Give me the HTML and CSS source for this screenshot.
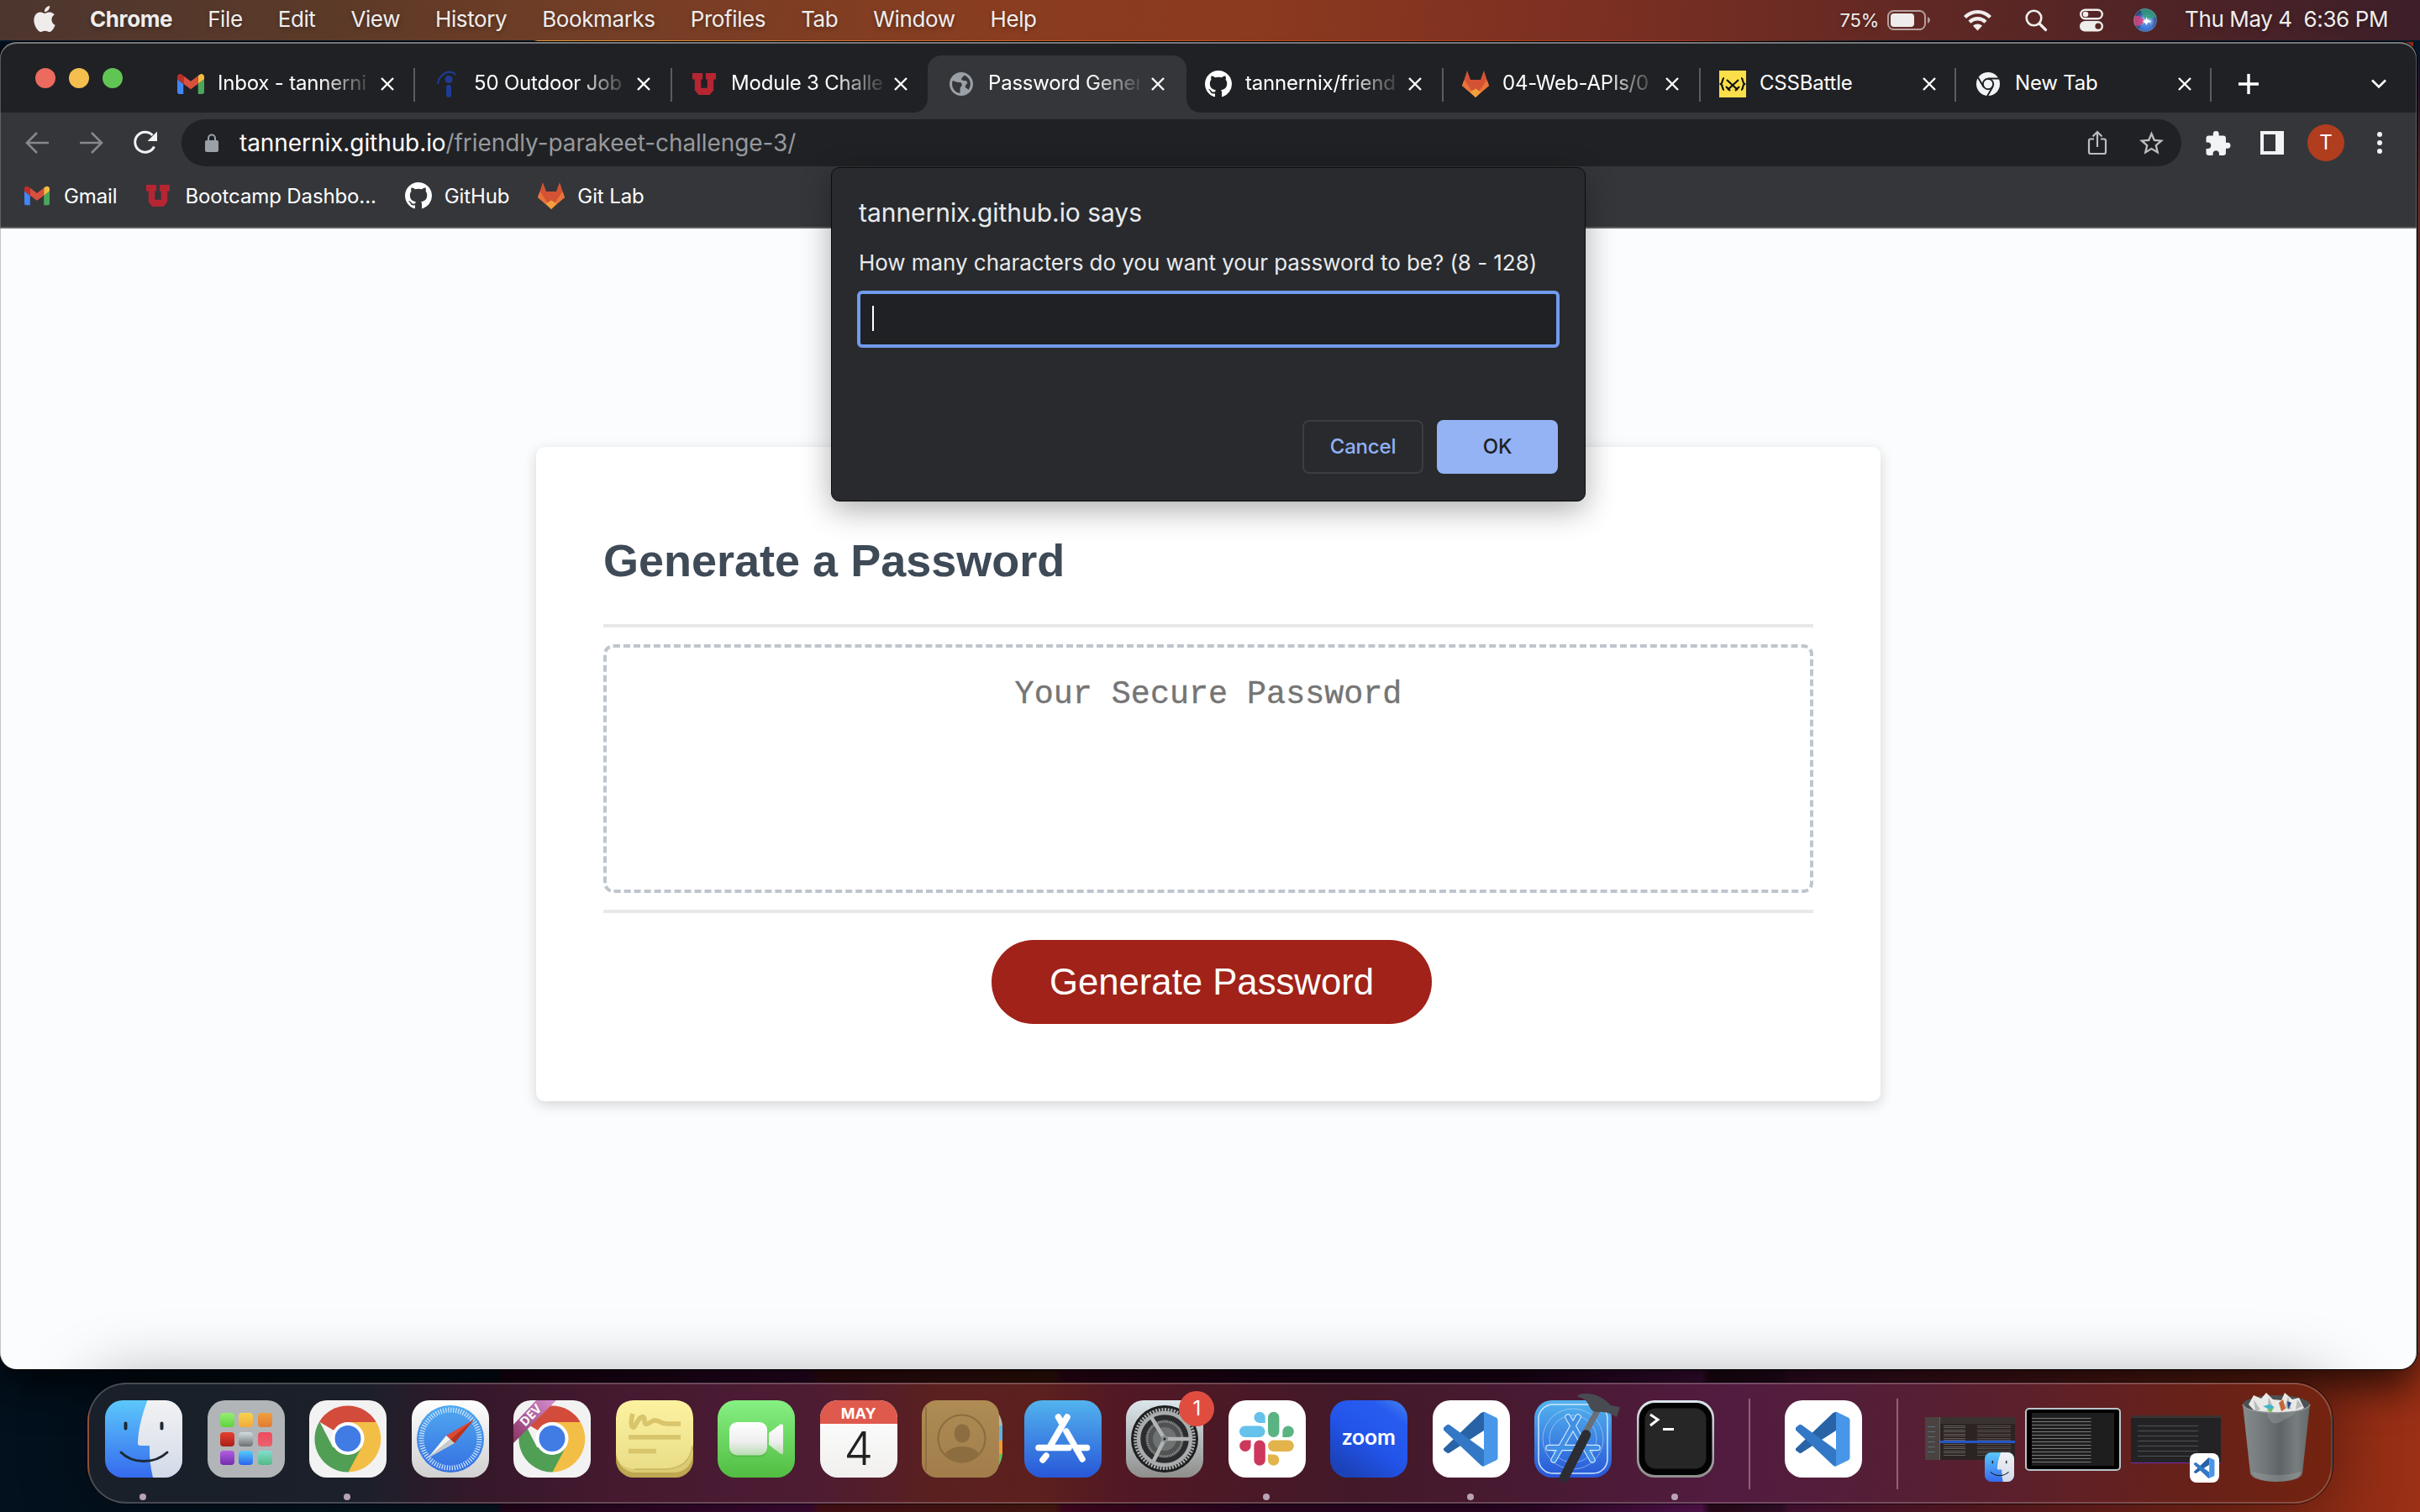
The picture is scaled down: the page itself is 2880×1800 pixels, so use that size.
FILE: index.html
```html
<!DOCTYPE html>
<html lang="en">
<head>
<meta charset="utf-8">
<title>Password Generator</title>
<link rel="stylesheet" href="styles.css">
</head>
<body>
<svg class="defs" width="0" height="0">
  <defs>
    <linearGradient id="g-finder" x1="0" y1="0" x2="0" y2="1"><stop offset="0" stop-color="#5cc8fa"/><stop offset="1" stop-color="#356aee"/></linearGradient>
    <linearGradient id="g-face" x1="0" y1="0" x2="0" y2="1"><stop offset="0" stop-color="#f2f2f4"/><stop offset="1" stop-color="#d2dae8"/></linearGradient>
    <linearGradient id="g-silver" x1="0" y1="0" x2="0" y2="1"><stop offset="0" stop-color="#fff"/><stop offset="1" stop-color="#d0d0d0"/></linearGradient>
    <linearGradient id="g-safari" x1="0" y1="0" x2="0" y2="1"><stop offset="0" stop-color="#50a9f0"/><stop offset="1" stop-color="#356fe2"/></linearGradient>
    <linearGradient id="g-dev" x1="0" y1="1" x2="1" y2="0"><stop offset="0" stop-color="#8a3162"/><stop offset="1" stop-color="#d48fd0"/></linearGradient>
    <linearGradient id="g-note" x1="0" y1="0" x2="0" y2="1"><stop offset="0" stop-color="#fdf2a0"/><stop offset="1" stop-color="#e9dd88"/></linearGradient>
    <linearGradient id="g-green" x1="0" y1="0" x2="0" y2="1"><stop offset="0" stop-color="#86f083"/><stop offset="1" stop-color="#52bd42"/></linearGradient>
    <linearGradient id="g-cam" x1="0" y1="0" x2="0" y2="1"><stop offset="0" stop-color="#fff"/><stop offset=".6" stop-color="#eee"/><stop offset="1" stop-color="#b9ddb3"/></linearGradient>
    <linearGradient id="g-brown" x1="0" y1="0" x2="0" y2="1"><stop offset="0" stop-color="#ae8c54"/><stop offset="1" stop-color="#a27d4b"/></linearGradient>
    <linearGradient id="g-store" x1="0" y1="0" x2="0" y2="1"><stop offset="0" stop-color="#52b3ee"/><stop offset="1" stop-color="#2857d8"/></linearGradient>
    <linearGradient id="g-set" x1="0" y1="0" x2="0" y2="1"><stop offset="0" stop-color="#dbe6ec"/><stop offset="1" stop-color="#8f8f8c"/></linearGradient>
    <linearGradient id="g-zoom" x1="1" y1="0" x2=".3" y2="1"><stop offset="0" stop-color="#4284ea"/><stop offset=".22" stop-color="#285cf0"/><stop offset=".6" stop-color="#2254ea"/><stop offset="1" stop-color="#1b42b8"/></linearGradient>
    <linearGradient id="g-bin" x1="0" y1="0" x2="1" y2="0"><stop offset="0" stop-color="#858a8c"/><stop offset=".3" stop-color="#74797b"/><stop offset=".55" stop-color="#5f6466"/><stop offset=".8" stop-color="#787d7f"/><stop offset="1" stop-color="#63686a"/></linearGradient>
    <radialGradient id="g-siri" cx=".55" cy=".55" r=".6"><stop offset="0" stop-color="#fff"/><stop offset=".25" stop-color="#8fb8f0"/><stop offset=".6" stop-color="#3b5fa8"/><stop offset="1" stop-color="#20324c"/></radialGradient>
    <clipPath id="c-app"><rect width="92" height="92" rx="21"/></clipPath>
    <clipPath id="c-siri"><circle cx="14" cy="14" r="14"/></clipPath>

    <symbol id="gmail" viewBox="52 42 88 66"><path fill="#4285f4" d="M58 108h14V74L52 59v43c0 3.320 2.690 6 6 6"/><path fill="#4ba75a" d="M120 108h14c3.320 0 6-2.690 6-6V59l-20 15"/><path fill="#f2bd3e" d="M120 48v26l20-15v-8c0-7.420-8.470-11.650-14.400-7.200"/><path fill="#d94f3d" d="M72 74V48l24 18 24-18v26L96 92"/><path fill="#bb2f28" d="M52 51v8l20 15V48l-5.600-4.200c-5.940-4.450-14.400-.22-14.400 7.200"/></symbol>
    <symbol id="indeed" viewBox="0 0 32 32"><path d="M5 16C6 7 14 0 22 2c2 .6 3 1.500 4 3" fill="none" stroke="#1e3c96" stroke-width="2"/><circle cx="18" cy="10.500" r="4.500" fill="#1e3c96"/><rect x="15" y="17" width="6" height="15" rx="3" fill="#1e3c96"/></symbol>
    <symbol id="utah" viewBox="0 0 32 30"><path fill="#b62532" d="M1 1h13v8h-2v11h8V9h-2V1h13v8h-3v14l-5 6H9l-5-6V9H1z"/></symbol>
    <symbol id="globe" viewBox="2 2 20 20"><path fill="#9aa0a6" d="M12 2C6.480 2 2 6.480 2 12s4.480 10 10 10 10-4.480 10-10S17.520 2 12 2zM4.200 12c0-1 .2-2 .5-2.800 2 .4 3.300 1.600 5.800 1.300 1.500 0 2 1 2 2.500 0 1-1.500 1.500-1.500 3v3.700C7 19.400 4.200 16 4.200 12zm13.700 5c-.4-1.600-2.500-1-2.500-3 0-1.500 2.600-2.500 1.500-4-1-1.200-3.500-.2-4.500-1.500-.8-1.200.5-2.500 1.600-3l.3-1c3.200 1 5.500 4 5.500 7.500 0 2-.7 3.700-1.900 5z"/></symbol>
    <symbol id="github" viewBox="0 0 16 16"><path fill="#fff" d="M8 0C3.580 0 0 3.580 0 8c0 3.540 2.290 6.530 5.470 7.590.4.070.55-.17.55-.38 0-.19-.01-.82-.01-1.490-2.010.37-2.530-.49-2.690-.94-.09-.23-.48-.94-.82-1.130-.28-.15-.68-.52-.01-.53.63-.01 1.080.58 1.230.82.720 1.210 1.870.87 2.330.66.070-.52.28-.87.51-1.070-1.780-.2-3.640-.89-3.640-3.950 0-.87.31-1.590.82-2.150-.08-.2-.36-1.020.08-2.120 0 0 .67-.21 2.200.82.640-.18 1.320-.27 2-.27s1.360.09 2 .27c1.530-1.040 2.200-.82 2.200-.82.440 1.100.16 1.920.08 2.120.51.56.82 1.270.82 2.150 0 3.070-1.870 3.750-3.650 3.950.29.25.54.73.54 1.480 0 1.070-.01 1.930-.01 2.200 0 .21.15.46.55.38A8.010 8.010 0 0 0 16 8c0-4.420-3.580-8-8-8z"/></symbol>
    <symbol id="gitlab" viewBox="0 0 32 32"><path fill="#e8743b" d="M2.500 11 0 18l16 14 16-14-2.500-7z"/><path fill="#d45334" d="M6 0 2.500 11 16 31 29.500 11 26 0l-4 11H10z"/><path fill="#e8743b" d="m2.500 11 7.500 12L16 31 0 18zM29.500 11 22 23l-6 8 16-13z"/><path fill="#f0a13e" d="m16 21.500-6.500 4L16 32l6.500-6.500z"/></symbol>
    <symbol id="battle" viewBox="0 0 32 32"><path fill="#fbdf4a" d="M0 0h32v32H0z"/><path d="M6 9c-3 0-1 5-4 7 3 2 1 7 4 7M26 9c3 0 1 5 4 7-3 2-1 7-4 7M9 11l13 12M23 11 10 23M8 19l5 5M24 19l-5 5" fill="none" stroke="#111" stroke-width="2.200"/></symbol>
    <symbol id="chromium" viewBox="0 0 28 28"><circle cx="14" cy="14" r="14" fill="#f1f3f4"/><circle cx="14" cy="14" r="6.200" fill="none" stroke="#202124" stroke-width="2"/><path d="M14 7.600h13M8.500 17.200 2 6.200M19.500 17.200 13 28.500" stroke="#202124" stroke-width="2"/></symbol>
    <symbol id="close" viewBox="0 0 16 16"><path d="m1 1 14 14M15 1 1 15" stroke="#fff" stroke-width="2.400"/></symbol>
    <symbol id="vscode" viewBox="0 0 92 92"><rect width="92" height="92" rx="21" fill="#fff"/><path fill="#2763a6" d="M13 57.500 57.500 15 61 13.700V36L20 62.500q-1.500 1-3 0L13 59.500z"/><path fill="#3378c6" d="M13 35.500v-3l4-3.200q1.500-1 3 0L61 59v19.500q-1.800.5-3.500-1z"/><path fill="#4896e8" d="m61 13.500 14.500 7q2 1 2 3v45q0 2-2 3l-14.500 7q-1 .3-1.500-.5l1.500-1.500z"/></symbol>
    <symbol id="finder" viewBox="0 0 92 92"><g clip-path="url(#c-app)"><path fill="url(#g-finder)" d="M0 0h92v92H0z"/><path fill="url(#g-face)" d="M50.500 0C43 20 39.500 36 39 51q0 3 3 3h11q-.5 20 4 38h35V0z"/></g><path d="M24.500 27.500v6M67.500 27.500v6" stroke="#1d2833" stroke-width="4" stroke-linecap="round"/><path d="M19 62c14 14 40 14 55 0" fill="none" stroke="#1d2833" stroke-width="3" stroke-linecap="round"/></symbol>
    <symbol id="chrome" viewBox="0 0 92 92"><rect width="92" height="92" rx="21" fill="#f3f2f2"/><path fill="#d34b3b" d="M46 46 12 25.500a39.500 39.500 0 0 1 67.500 0z"/><path fill="#f3be45" d="M46 46V26h33.800A39.500 39.500 0 0 1 46.500 85.500z"/><path fill="#519e55" d="M46 46l16.500 9.500-16 30A39.500 39.500 0 0 1 12.300 25.300l16 31z"/><circle cx="46" cy="45.500" r="19.500" fill="#fff"/><circle cx="46" cy="45.500" r="15.500" fill="#417be4"/></symbol>
  </defs>
</svg>

<header class="menubar">
  <svg class="apple" viewBox="2 0 20 24"><path fill="#efedec" d="M12.152 6.896c-.948 0-2.415-1.078-3.960-1.040-2.040.027-3.910 1.183-4.961 3.014-2.117 3.675-.546 9.103 1.519 12.090 1.013 1.454 2.208 3.090 3.792 3.039 1.520-.065 2.090-.987 3.935-.987 1.831 0 2.350.987 3.960.948 1.637-.026 2.676-1.480 3.676-2.948 1.156-1.688 1.636-3.325 1.662-3.415-.039-.013-3.182-1.221-3.220-4.857-.026-3.040 2.480-4.494 2.597-4.559-1.429-2.090-3.623-2.324-4.390-2.376-2-.156-3.675 1.090-4.610 1.090zM15.530 3.830c.843-1.012 1.400-2.427 1.245-3.830-1.207.052-2.662.805-3.532 1.818-.78.896-1.454 2.338-1.273 3.714 1.338.104 2.715-.688 3.559-1.701"/></svg>
  <nav class="menus"><b>Chrome</b><span>File</span><span>Edit</span><span>View</span><span>History</span><span>Bookmarks</span><span>Profiles</span><span>Tab</span><span>Window</span><span>Help</span></nav>
  <div class="status">
    <span class="percent">75%</span>
    <svg class="battery" viewBox="0 0 52 24"><rect x="1" y="1" width="44" height="22" rx="6.500" fill="none" stroke="#b6a09e" stroke-width="2"/><rect x="4" y="4" width="28" height="16" rx="4" fill="#efedec"/><path d="M48 8q3 1.500 3 4t-3 4z" fill="#b6a09e"/></svg>
    <svg class="wifi" viewBox="0 0 34 26"><path d="M2 9.500C10.500 1 23.500 1 32 9.500M7.500 15.200c5.300-5.300 13.700-5.300 19 0" fill="none" stroke="#efedec" stroke-width="4.300"/><path d="M17 25.500l-5.500-5.700c3-3 8-3 11 0z" fill="#efedec"/></svg>
    <svg class="search" viewBox="0 0 26 26"><circle cx="10.500" cy="10.500" r="8.800" fill="none" stroke="#efedec" stroke-width="2.600"/><path d="m17 17 7.500 7.500" stroke="#efedec" stroke-width="3.200" stroke-linecap="round"/></svg>
    <svg class="control" viewBox="0 0 28 28"><rect x="1.200" y="1.700" width="25.600" height="10.600" rx="5.300" fill="none" stroke="#efedec" stroke-width="2.400"/><circle cx="7" cy="7" r="3.300" fill="#efedec"/><rect y="15" width="28" height="12.500" rx="6.250" fill="#efedec"/><circle cx="22" cy="21.200" r="3.600" fill="#552826"/></svg>
    <svg class="siri" viewBox="0 0 28 28"><circle cx="14" cy="14" r="14" fill="url(#g-siri)"/><g clip-path="url(#c-siri)"><path d="M0 10C4 7 10 10 13 15c-3 5-8 7-13 5z" fill="#d8417c" opacity=".85"/><path d="M7 0c9-1 18 1 21 10-5 2-10 2-14 3z" fill="#2fa07a" opacity=".8"/><path d="M6 25c5 3 12 3 18-1-3-5-6-8-10-8z" fill="#3d7be0" opacity=".7"/></g><path d="m15.500 10 1.500 4 5 1.500-5 1.500-1.500 3-2-3-3-2 4-1z" fill="#fff"/><circle cx="14" cy="14" r="13.400" fill="none" stroke="#7d8a90" stroke-width="1" opacity=".7"/></svg>
    <span class="clock">Thu May 4&nbsp; 6:36 PM</span>
  </div>
</header>

<main class="window">
  <div class="tabstrip">
    <div class="lights"><i class="red"></i><i class="yellow"></i><i class="green"></i></div>
    <div class="tabs">
      <div class="tab"><svg class="fav"><use href="#gmail"/></svg><span class="label">Inbox - tannerni</span><svg class="x"><use href="#close"/></svg></div>
      <div class="tab"><svg class="fav tall"><use href="#indeed"/></svg><span class="label">50 Outdoor Job</span><svg class="x"><use href="#close"/></svg></div>
      <div class="tab plain"><svg class="fav"><use href="#utah"/></svg><span class="label">Module 3 Challe</span><svg class="x"><use href="#close"/></svg></div>
      <div class="tab active"><svg class="fav"><use href="#globe"/></svg><span class="label">Password Gener</span><svg class="x"><use href="#close"/></svg></div>
      <div class="tab"><svg class="fav tall"><use href="#github"/></svg><span class="label">tannernix/friend</span><svg class="x"><use href="#close"/></svg></div>
      <div class="tab"><svg class="fav tall"><use href="#gitlab"/></svg><span class="label">04-Web-APIs/0</span><svg class="x"><use href="#close"/></svg></div>
      <div class="tab"><svg class="fav tall"><use href="#battle"/></svg><span class="label whole">CSSBattle</span><svg class="x"><use href="#close"/></svg></div>
      <div class="tab"><svg class="fav"><use href="#chromium"/></svg><span class="label whole">New Tab</span><svg class="x"><use href="#close"/></svg></div>
    </div>
    <svg class="plus" viewBox="0 0 24 24"><path d="M12 0v24M0 12h24" stroke="#fff" stroke-width="3.400"/></svg>
    <svg class="chevron" viewBox="0 0 18 12"><path d="m1 1.500 8 8 8-8" fill="none" stroke="#fff" stroke-width="2.600"/></svg>
  </div>

  <div class="toolbar">
    <svg class="back" viewBox="0 0 28 26"><path d="M28 13H2M14 1 2 13l12 12" fill="none" stroke="#86888a" stroke-width="2.600"/></svg>
    <svg class="forward" viewBox="0 0 28 26"><path d="M0 13h26M14 1l12 12-12 12" fill="none" stroke="#86888a" stroke-width="2.600"/></svg>
    <svg class="reload" viewBox="0 0 28 28"><path d="M24.500 18.500A12 12 0 1 1 22.500 5" fill="none" stroke="#f1f3f4" stroke-width="3"/><path d="M28 .5V12H16.500z" fill="#f1f3f4"/></svg>
    <div class="omnibox">
      <svg class="lock" viewBox="0 0 16 22"><rect y="8" width="16" height="14" rx="2" fill="#9aa0a6"/><path d="M4 8V5.500a4 4 0 0 1 8 0V8" fill="none" stroke="#9aa0a6" stroke-width="2"/></svg>
      <span class="url"><span class="host">tannernix.github.io</span><span class="path">/friendly-parakeet-challenge-3/</span></span>
      <svg class="share" viewBox="0 0 22 30"><path d="M7 10.500H3q-2 0-2 2V26q0 2 2 2h16q2 0 2-2V12.500q0-2-2-2h-4M11 20V3M5.500 7.500 11 2l5.500 5.500" fill="none" stroke="#bdbdbf" stroke-width="2.200"/></svg>
      <svg class="star" viewBox="2 2 20 19"><path fill="#bdbdbf" d="M22 9.240l-7.190-.62L12 2 9.190 8.630 2 9.240l5.460 4.730L5.820 21 12 17.270 18.180 21l-1.630-7.030L22 9.240zM12 15.400l-3.760 2.270 1-4.280-3.320-2.880 4.380-.38L12 6.100l1.710 4.040 4.380.38-3.320 2.880 1 4.280L12 15.400z"/></svg>
    </div>
    <svg class="puzzle" viewBox="2 1 21 21"><path fill="#f1f3f4" d="M20.500 11H19V7c0-1.100-.9-2-2-2h-4V3.500a2.500 2.500 0 0 0-5 0V5H4c-1.100 0-1.990.9-1.990 2v3.800H3.500c1.490 0 2.700 1.210 2.700 2.700s-1.210 2.700-2.700 2.700H2V20c0 1.100.9 2 2 2h3.800v-1.500c0-1.490 1.210-2.700 2.700-2.700 1.490 0 2.700 1.210 2.700 2.700V22H17c1.100 0 2-.9 2-2v-4h1.500a2.500 2.500 0 0 0 0-5z"/></svg>
    <div class="panel"></div>
    <div class="avatar">T</div>
    <div class="dots"><i></i><i></i><i></i></div>
  </div>

  <div class="bookmarks">
    <div class="bm"><svg class="bi"><use href="#gmail"/></svg>Gmail</div>
    <div class="bm"><svg class="bi"><use href="#utah"/></svg>Bootcamp Dashbo...</div>
    <div class="bm near"><svg class="bi big"><use href="#github"/></svg>GitHub</div>
    <div class="bm near"><svg class="bi big"><use href="#gitlab"/></svg>Git Lab</div>
  </div>

  <div class="page">
    <section class="card">
      <h2>Generate a Password</h2>
      <div class="secret">Your Secure Password</div>
      <div class="foot"><button class="generate">Generate Password</button></div>
    </section>
  </div>

  <div class="dialog">
    <div class="says">tannernix.github.io says</div>
    <div class="question">How many characters do you want your password to be? (8 - 128)</div>
    <div class="field"><i class="caret"></i></div>
    <div class="actions"><button class="cancel">Cancel</button><button class="ok">OK</button></div>
  </div>
</main>

<footer class="dock">
  <div class="apps">
    <div class="app on"><svg viewBox="0 0 92 92"><use href="#finder"/></svg></div>
    <div class="app"><div class="launchpad"><i></i><i></i><i></i><i></i><i></i><i></i><i></i><i></i><i></i></div></div>
    <div class="app on"><svg viewBox="0 0 92 92"><use href="#chrome"/></svg></div>
    <div class="app"><svg viewBox="0 0 92 92"><rect width="92" height="92" rx="21" fill="url(#g-silver)"/><circle cx="46" cy="46" r="40" fill="url(#g-safari)"/><circle cx="46" cy="46" r="34.500" fill="none" stroke="#d4e8fa" stroke-width="6" stroke-dasharray="1.200 1.810"/><path fill="#db4a36" d="M74 23 41 42l10 9z"/><path fill="#b8321f" d="m74 23-28 23.500 5 4.500z"/><path fill="#f4f4f2" d="M19 69 41 42l5 4.500z"/><path fill="#c9cac8" d="m19 69 32-18-5-4.500z"/></svg></div>
    <div class="app"><svg viewBox="0 0 92 92"><use href="#chrome"/><path clip-path="url(#c-app)" fill="url(#g-dev)" d="M0 29 27 0h24L0 51z"/><text class="devtext" transform="translate(14 32) rotate(-46)">DEV</text></svg></div>
    <div class="app"><svg viewBox="0 0 92 92"><rect y="6" width="92" height="86" rx="21" fill="#bfa650"/><path fill="#dccb72" d="M0 60h92q-1 24-22 26H22Q2 84 0 60"/><path fill="url(#g-note)" d="M21 0h50q20 1 21 21v31q-2 28-34 30H22Q1 80 0 62V21Q1 1 21 0"/><path fill="none" stroke="#b8a04c" stroke-width="1.500" opacity=".6" d="M91 54q-3 27-33 28H22"/><path d="M20 16c-4 14 0 22 4 12 4-8 10-12 10-4 0 9 6 2 11 0 8-1 6 4 16 4h16M15 44h62M15 60.500h33" fill="none" stroke="#d8c56c" stroke-width="5.500"/></svg></div>
    <div class="app"><svg viewBox="0 0 92 92"><rect width="92" height="92" rx="21" fill="url(#g-green)"/><rect x="14" y="28" width="45" height="39.500" rx="9" fill="#3d9733" opacity=".35"/><rect x="14" y="26" width="45" height="39.500" rx="9" fill="url(#g-cam)"/><path d="M61 39l13-10q4-2 4 2v31q0 4-4 1L61 53z" fill="url(#g-cam)"/></svg></div>
    <div class="app"><div class="calendar"><b>MAY</b><span>4</span></div></div>
    <div class="app"><svg class="wide" viewBox="0 0 96 92"><path fill="#b7b7ae" d="M80 8q14 4 16 22H80z"/><path fill="#5fb3e6" d="M80 30h16v18H80z"/><path fill="#f29a34" d="M80 48h16v16H80z"/><path fill="#5fc264" d="M80 64h16q-2 18-16 22z"/><rect width="92" height="92" rx="18" fill="url(#g-brown)"/><path d="M5 8v76" stroke="#8a6a3c" stroke-width="1.500"/><circle cx="47.500" cy="45.500" r="28" fill="none" stroke="#8c6d40" stroke-width="2.200"/><ellipse cx="48" cy="39.500" rx="9.500" ry="11" fill="#8c6d40"/><path fill="#8c6d40" d="M28 63q7-8 20-8t20 8q-8 11.500-20 11.500T28 63"/></svg></div>
    <div class="app"><svg viewBox="0 0 92 92"><rect width="92" height="92" rx="21" fill="url(#g-store)"/><path d="M51 20 30 56M40.500 20l4 7M50 37l19 33M17 56.500h36M65 56.500h9.500M26 66l-4 5" stroke="#fff" stroke-width="7.500" stroke-linecap="round"/></svg></div>
    <div class="app"><svg viewBox="0 0 92 92"><rect width="92" height="92" rx="21" fill="url(#g-set)"/><circle cx="46" cy="46" r="40" fill="#1c1e1f"/><circle cx="46" cy="46" r="36.500" fill="#2a2c2d"/><circle cx="46" cy="46" r="35" fill="none" stroke="#aeb1b1" stroke-width="4" stroke-dasharray="2 1.660"/><circle cx="46" cy="46" r="31" fill="none" stroke="#a9acac" stroke-width="4.500"/><circle cx="46" cy="46" r="22" fill="#515353"/><circle cx="46" cy="46" r="21" fill="none" stroke="#8f9292" stroke-width="3" stroke-dasharray="1.200 1"/><circle cx="46" cy="46" r="14" fill="#6f7272"/><path d="M46 46h30M46 46 30 20M46 46 33 72" stroke="#b2b5b5" stroke-width="4.500"/><circle cx="46" cy="46" r="4" fill="#8b8e8e"/><circle cx="46" cy="46" r="1.500" fill="#222"/></svg><span class="badge">1</span></div>
    <div class="app on"><svg viewBox="0 0 92 92"><rect width="92" height="92" rx="21" fill="#fff"/><g fill="#66c2ea"><rect x="13" y="30.500" width="30.500" height="13.400" rx="6.700"/><path d="M30.500 20.400a6.600 6.600 0 0 1 13.200 0v6.700h-6.600a6.700 6.700 0 0 1-6.600-6.700"/></g><g fill="#5ab383"><rect x="47" y="13.700" width="13.400" height="30.200" rx="6.700"/><path d="M64.400 43.900v-6.700a6.700 6.700 0 1 1 6.700 6.700z"/></g><g fill="#ce375c"><rect x="30.400" y="47.500" width="13.400" height="30.200" rx="6.700"/><path d="M26.600 47.500v6.700a6.700 6.700 0 1 1-6.700-6.700z"/></g><g fill="#e2b44b"><rect x="47" y="47.500" width="30.800" height="13.400" rx="6.700"/><path d="M47 64.400h6.700a6.700 6.700 0 1 1-6.700 6.700z"/></g></svg></div>
    <div class="app"><svg viewBox="0 0 92 92"><rect width="92" height="92" rx="21" fill="url(#g-zoom)"/><text class="zoomtext" x="46" y="53">zoom</text></svg></div>
    <div class="app on"><svg viewBox="0 0 92 92"><use href="#vscode"/></svg></div>
    <div class="app"><svg viewBox="0 0 92 92"><rect width="92" height="92" rx="21" fill="url(#g-store)"/><g fill="none" stroke="#cfe6fb"><rect x="5" y="5" width="82" height="82" rx="17" stroke-width="1.500"/><circle cx="46" cy="46" r="36" stroke-width="1" opacity=".5"/><circle cx="46" cy="46" r="28" stroke-width="1" opacity=".5"/></g><path d="M52 20 23 71M40 20l29 51M17 56.500h58" stroke="#d5eafc" stroke-width="7.500" stroke-linecap="round"/><path d="M52 20 23 71M40 20l29 51M17 56.500h58" stroke="#4190e6" stroke-width="5.200" stroke-linecap="round"/><path d="M77 9 60 40" stroke="#6b6e74" stroke-width="7"/><path d="M61.500 41 35.500 92" stroke="#2b2d33" stroke-width="11.500" stroke-linecap="round"/><path fill="#484b51" d="M51-4q2-6 20-3 12 4 20 13l11 2-4 12-10-5q-10-2-14-1-7-1-9-8-4-9-14-10"/></svg></div>
    <div class="app on"><svg viewBox="0 0 92 92"><rect width="92" height="92" rx="21" fill="url(#g-set)"/><rect x="2.500" y="3" width="87" height="86" rx="19" fill="#030303"/><rect x="9.500" y="9.500" width="73" height="72" rx="13" fill="#262626"/><path d="m16 17 9 6-9 7" fill="none" stroke="#fff" stroke-width="3"/><path d="M31 34.500h13" stroke="#fff" stroke-width="3"/></svg></div>
  </div>
  <i class="rule"></i>
  <div class="app"><svg viewBox="0 0 92 92"><use href="#vscode"/></svg></div>
  <i class="rule"></i>
  <div class="thumbs">
    <div class="thumb files"><div class="side"></div><div class="list"><i class="head"></i><i class="rows a"></i><i class="sel"></i><i class="rows b"></i></div><svg class="mini"><use href="#finder"/></svg></div>
    <div class="thumb term"><i></i></div>
    <div class="thumb code"><i></i><svg class="mini"><use href="#vscode"/></svg></div>
  </div>
  <svg class="trash" viewBox="0 0 82 106"><ellipse cx="41" cy="14" rx="40" ry="11" fill="#4c5052"/><path fill="#e9e9e7" d="M8 14 14 3l9 4 6-7 8 8 10 1 4-9 9 8 8-2 6 12-12 10-22 1-20-2z"/><path fill="#b9bbba" d="m14 8 8 12-6 2zM32 5l6 14-8 2zM55 4l4 16-8-2zM66 8l-2 12 8-4z"/><path fill="#3fb5c9" d="m25 16 8-2 6 3-6 3z"/><path fill="#6cbf4a" d="m30 21 8-3-3 5z"/><path fill="#c2673a" d="m44 12 5-4 3 11-5 3z"/><path fill="#2d4a86" d="m54 10 5 2-4 8z"/><path fill="url(#g-bin)" d="M1 14q5 9 40 10 35-1 40-10l-9 82q-2 9-31 10-28-1-31-10z"/><path fill="#a3a8aa" opacity=".35" d="M12 94q29 8 59 0-2 11-30 12-27-1-29-12M30 24q4 20 20 8 8-3 14-9-10 3-34 1"/><path d="M1 14q3 9 40 10 37-1 40-10" fill="none" stroke="#8e9395" stroke-width="1.500"/></svg>
</footer>
</body>
</html>
```

FILE: styles.css
```css
* { box-sizing: border-box; }
html, body { margin: 0; height: 100%; }
body {
  width: 2880px;
  height: 1800px;
  overflow: hidden;
  display: flex;
  flex-direction: column;
  position: relative;
  font-family: Inter, "Liberation Sans", sans-serif;
  background:
    linear-gradient(90deg, #04192c 635px, #e09a3c 640px, #cf7434 1000px, #b0441f 1600px, #a03a20 2000px, #04192c 2250px) 0 48px / 100% 2px no-repeat,
    linear-gradient(#04192c 0, #3a1a3c 60px, #8a3a2c 180px, #a04226 400px, #a04226 100%) right 50px / 8px 1560px no-repeat,
    linear-gradient(90deg, #03111e 0, #04121e 590px, #23041a 600px, #3d0a36 965px, #4a1018 975px, #4a1a12 1255px, #430722 1265px, #2b0520 1500px, #2b0524 1800px, #571450 2025px, #2a0a1c 2035px, #34102a 2120px, #4a1236 2130px, #5c1a22 2350px, #7a2616 2650px, #9c3015 2880px);
}
svg { display: block; flex: none; overflow: visible; }
button { font: inherit; margin: 0; }
.defs { position: absolute; }

/* Menu bar */
.menubar {
  height: 48px;
  flex: none;
  display: flex;
  align-items: center;
  padding: 0 38px 0 40px;
  color: #efedec;
  font-size: 26px;
  letter-spacing: -.4px;
  line-height: 44px;
  text-shadow: 0 2px 5px rgba(0, 0, 0, .35);
  background: linear-gradient(90deg, #4d362f 0, #5c3a28 400px, #733e26 700px, #8a3d20 1200px, #8b391f 1500px, #7b2f22 1920px, #5c2724 2350px, #3d1f29 2880px);
}
.apple { width: 26px; height: 31px; margin: -3px 41px 0 0; }
.menus { display: flex; gap: 42px; white-space: nowrap; margin-top: -2px; }
.status { display: flex; align-items: center; margin-left: auto; height: 48px; }
.clock { margin-top: -2px; }
.percent { font-size: 22px; letter-spacing: -.2px; margin-right: 10px; }
.battery { width: 52px; height: 24px; margin-right: 38px; }
.wifi { width: 35px; height: 26px; margin-right: 39px; }
.search { width: 26px; height: 26px; margin-right: 39px; }
.control { width: 28px; height: 28px; margin-right: 36px; }
.siri { width: 28px; height: 28px; margin-right: 33px; }

/* Browser window */
.window {
  position: relative;
  flex: none;
  width: 2876px;
  height: 1580px;
  margin-top: 2px;
  display: flex;
  flex-direction: column;
  border-radius: 20px;
  background: #35363a;
  box-shadow: 0 0 0 1px #000, 0 20px 50px rgba(0, 0, 0, .75);
  clip-path: inset(-1px -4px -200px 0);
}
.window::after {
  content: "";
  position: absolute;
  inset: 0;
  border-radius: 20px;
  box-shadow: inset 0 2px 0 #77787b, inset 1px 0 0 rgba(140, 140, 145, .5), inset -1px 0 0 rgba(140, 140, 145, .5);
  pointer-events: none;
}
.tabstrip {
  height: 84px;
  flex: none;
  display: flex;
  align-items: center;
  padding: 16px 36px 0 42px;
  background: #202124;
  border-radius: 20px 20px 0 0;
}
.lights { display: flex; gap: 16px; width: 146px; margin-top: -14px; }
.lights i { width: 24px; height: 24px; border-radius: 50%; }
.red { background: #ec6a5e; }
.yellow { background: #f4bf4f; }
.green { background: #61c554; }
.tabs { display: grid; grid-template-columns: 305px 306px 305px 307px 306px 306px 304px 304px; height: 68px; flex: none; }
.tab {
  position: relative;
  display: flex;
  align-items: center;
  padding-left: 23px;
  color: #fff;
  font-size: 24px;
  letter-spacing: -.2px;
  white-space: nowrap;
}
.tab::after { content: ""; position: absolute; right: -1px; top: 15px; width: 2px; height: 40px; background: #5b5c5f; }
.tab.plain::after, .tab.active::after { display: none; }
.fav { width: 32px; height: 28px; margin-right: 16px; }
.fav.tall { height: 32px; }
.label {
  width: 180px;
  overflow: hidden;
  margin-right: 14px;
  line-height: 34px;
  margin-top: -2px;
  -webkit-mask-image: linear-gradient(90deg, #000 68%, rgba(0, 0, 0, .12) 100%);
  mask-image: linear-gradient(90deg, #000 68%, rgba(0, 0, 0, .12) 100%);
}
.label.whole { -webkit-mask-image: none; mask-image: none; }
.x { width: 16px; height: 16px; }
.active { background: #35363a; border-radius: 16px 16px 0 0; padding-left: 24px; margin-right: -1px; }
.active::before {
  content: "";
  position: absolute;
  left: -16px;
  right: -16px;
  bottom: 0;
  height: 16px;
  background:
    radial-gradient(circle at 0 0, transparent 15.5px, #35363a 16px) left / 16px 16px no-repeat,
    radial-gradient(circle at 16px 0, transparent 15.5px, #35363a 16px) right / 16px 16px no-repeat;
}
.plus { width: 24px; height: 24px; margin-left: 33px; }
.chevron { width: 18px; height: 12px; margin-left: auto; }

.toolbar { height: 64px; flex: none; display: flex; align-items: center; padding: 8px 41px 0 30px; }
.back, .forward { width: 28px; height: 26px; margin-right: 37px; }
.reload { width: 28px; height: 28px; margin-left: -1px; }
.omnibox {
  width: 2380px;
  height: 56px;
  margin: 0 29px 0 29px;
  padding: 0 21px 0 28px;
  border-radius: 28px;
  background: #202124;
  display: flex;
  align-items: center;
  font-size: 28px;
  letter-spacing: -.08px;
}
.lock { width: 16px; height: 22px; margin-right: 25px; }
.url { flex: 1; white-space: nowrap; }
.host { color: #fff; }
.path { color: #96999c; }
.share { width: 22px; height: 30px; margin-right: 39px; }
.star { width: 29px; height: 28px; }
.puzzle { width: 30px; height: 29px; margin-right: 35px; }
.panel { width: 28px; height: 28px; margin-right: 28px; border: 4px solid #f1f3f4; border-right-width: 10px; }
.avatar { width: 44px; height: 44px; border-radius: 50%; background: #b03d1e; color: #fff; font-size: 24px; line-height: 44px; text-align: center; }
.dots { width: 6px; margin-left: auto; display: grid; gap: 4px; }
.dots i { width: 6px; height: 6px; border-radius: 50%; background: #f1f3f4; }

.bookmarks {
  height: 74px;
  flex: none;
  display: flex;
  align-items: center;
  gap: 34px;
  padding: 0 0 2px 29px;
  border-bottom: 2px solid #5f6063;
  font-size: 24px;
  letter-spacing: -.12px;
  color: #fff;
}
.bm { display: flex; align-items: center; gap: 17px; }
.bm.near { gap: 15px; }
.bi { width: 30px; height: 28px; }
.bi.big { width: 32px; height: 32px; }

/* Web page */
.page { flex: 1; display: flex; flex-direction: column; align-items: center; padding-top: 260px; background: #fafcfe; border-radius: 0 0 20px 20px; }
.card {
  width: 1600px;
  height: 779px;
  padding: 0 80px;
  background: #fff;
  border-radius: 10px;
  box-shadow: 0 4px 16px rgba(0, 0, 0, .16);
  font-family: "Liberation Sans", Arial, sans-serif;
}
.card h2 { margin: 0; height: 215px; padding-top: 102px; border-bottom: 4px solid #e8e8e8; color: #3f4a57; font-size: 54px; line-height: 66px; }
.secret {
  height: 296px;
  margin: 20px 0;
  padding-top: 33px;
  border: 4px dashed #bec5cd;
  border-radius: 12px;
  text-align: center;
  color: #757575;
  font: 38.4px/46px "Liberation Mono", "Courier New", monospace;
  -webkit-text-stroke: .4px #757575;
}
.foot { border-top: 4px solid #e8e8e8; padding: 32px 0 0 8px; display: flex; justify-content: center; }
.generate { width: 524px; height: 100px; border: 0; border-radius: 50px; background: #a02219; color: #fff; font-size: 43.700px; }

/* Prompt */
.dialog {
  position: absolute;
  left: 989px;
  top: 149px;
  width: 898px;
  height: 398px;
  padding: 0 30px 0 31px;
  background: #292a2d;
  border: 1px solid #0c0c0e;
  border-radius: 10px;
  box-shadow: 0 10px 36px rgba(0, 0, 0, .32);
  color: #e8eaed;
}
.says { margin: 34px 0 0 1px; font-size: 30px; letter-spacing: -.05px; line-height: 38px; white-space: nowrap; }
.question { margin: 24px 0 0 1px; font-size: 26px; letter-spacing: -.05px; line-height: 34px; white-space: nowrap; }
.field { height: 68px; width: 836px; margin: 16px 0 86px -1px; border: 4px solid #719bed; border-radius: 6px; background: #202124; padding: 14px; }
.caret { display: block; width: 2px; height: 30px; background: #fff; }
.actions { display: flex; gap: 16px; justify-content: flex-end; padding-right: 2px; }
.actions button { width: 144px; height: 64px; border-radius: 8px; font-size: 24px; font-weight: 500; letter-spacing: -.2px; padding: 0 0 2px; }
.cancel { border: 2px solid #3c3d41; background: none; color: #8fb1f5; }
.ok { border: 0; background: #94b3f5; color: #202124; }

/* Dock */
.dock {
  position: relative;
  flex: none;
  width: 2672px;
  height: 144px;
  margin: 16px 0 0 104px;
  display: flex;
  align-items: flex-start;
  padding: 19px 0 0 19px;
  border: 2px solid rgba(255, 255, 255, .2);
  border-radius: 46px;
  background: linear-gradient(90deg, #19202a 0, #1b202a 320px, #35182a 460px, #45192f 620px, #4d1c34 860px, #5a2020 1000px, #5c201e 1130px, #521824 1230px, #431929 1500px, #4a1a34 1750px, #521c40 1960px, #571f33 2200px, #672119 2500px, #74230f 2672px);
  box-shadow: 0 0 0 1px rgba(0, 0, 0, .6), 0 0 80px rgba(0, 0, 0, .36);
}
.apps { display: flex; justify-content: space-between; width: 1915px; }
.app { position: relative; width: 92px; height: 92px; flex: none; }
.app > svg { width: 92px; height: 92px; }
.app > svg.wide { width: 96px; }
.app.on::after { content: ""; position: absolute; left: 41px; top: 111px; width: 8px; height: 8px; border-radius: 50%; background: #b9a3b3; }
.launchpad { height: 92px; border-radius: 21px; background: #b2b5b8; padding: 15px; display: grid; grid-template-columns: repeat(3, 17px); gap: 5.500px; grid-auto-rows: 17px; }
.launchpad i { border-radius: 4px; }
.launchpad i:nth-child(1) { background: linear-gradient(#97ee72, #5fd33d); }
.launchpad i:nth-child(2) { background: linear-gradient(#f9d44e, #f0aa39); }
.launchpad i:nth-child(3) { background: linear-gradient(#efa03b, #e27a34); }
.launchpad i:nth-child(4) { background: linear-gradient(#e8412f, #a91f16); }
.launchpad i:nth-child(5) { background: linear-gradient(#d3dee2, #6c6f70); }
.launchpad i:nth-child(6) { background: linear-gradient(#ef4b5c, #e8636d); }
.launchpad i:nth-child(7) { background: linear-gradient(#b15fe0, #742bb0); }
.launchpad i:nth-child(8) { background: linear-gradient(#55cdfb, #2a63ee); }
.launchpad i:nth-child(9) { background: linear-gradient(#7fded0, #54b985); }
.devtext { font: 700 15px "Open Sans", sans-serif; fill: #fff; }
.zoomtext { font: 700 26px Lato, sans-serif; fill: #fff; text-anchor: middle; }
.calendar { height: 92px; border-radius: 21px; overflow: hidden; background: linear-gradient(#fff, #f1f0ef); text-align: center; }
.calendar b { display: block; height: 28px; font-size: 18px; line-height: 31px; color: #fff; background: #e0594d; }
.calendar span { display: block; font-size: 55px; font-weight: 300; line-height: 59px; color: #222; }
.badge { position: absolute; left: 63px; top: -11px; width: 42px; height: 42px; border-radius: 50%; background: #e04d3f; color: #fff; font-size: 24px; line-height: 42px; text-align: center; }
.rule { width: 2px; height: 108px; margin: -2px 41px 0; background: rgba(225, 180, 200, .45); flex: none; }
.thumbs { display: flex; gap: 12px; align-items: center; height: 92px; margin-left: -9px; }
.thumb { position: relative; }
.files { width: 107px; height: 51px; margin-top: -1px; display: flex; background: #2c2423; }
.side { width: 18px; background: repeating-linear-gradient(transparent 0 3px, rgba(120, 170, 210, .4) 3px 4px, transparent 4px 6px) 3px 8px / 9px 36px no-repeat, #4b4341; border-right: 1px solid #6a605e; }
.list { flex: 1; display: flex; flex-direction: column; }
.head { height: 8px; background: #3a3230; }
.rows { background: repeating-linear-gradient(transparent 0 1.500px, rgba(200, 200, 200, .35) 1.500px 2.500px) 4px 0 / 26px 100% no-repeat, repeating-linear-gradient(transparent 0 1.500px, rgba(200, 200, 200, .25) 1.500px 2.500px) 44px 0 / 40px 100% no-repeat; }
.rows.a { height: 20px; }
.rows.b { height: 15px; }
.sel { height: 3px; background: #2456c4; }
.term { width: 114px; height: 75px; padding: 4px 6px; background: #000; border: 2px solid #b9c4c8; border-radius: 5px; }
.term i { display: block; height: 100%; background: repeating-linear-gradient(#1e1e1e 0 2px, #7a7a7a 2px 3px, #1e1e1e 3px 4px) 0 4px / 72% 90% no-repeat, #1e1e1e; }
.code { width: 107px; height: 57px; padding: 6px 8px; background: #232326; border-top: 3px solid #3b3331; border-bottom: 1px solid #7a2bb0; }
.code i { display: block; width: 72px; height: 100%; background: repeating-linear-gradient(#232326 0 3px, #4c4f53 3px 4px, #232326 4px 6px); }
.mini { position: absolute; right: 2px; width: 35px; height: 35px; }
.files .mini { top: 42px; right: 1px; }
.code .mini { top: 42px; }
.trash { width: 82px; height: 106px; margin: -9px 0 0 25px; }
```
